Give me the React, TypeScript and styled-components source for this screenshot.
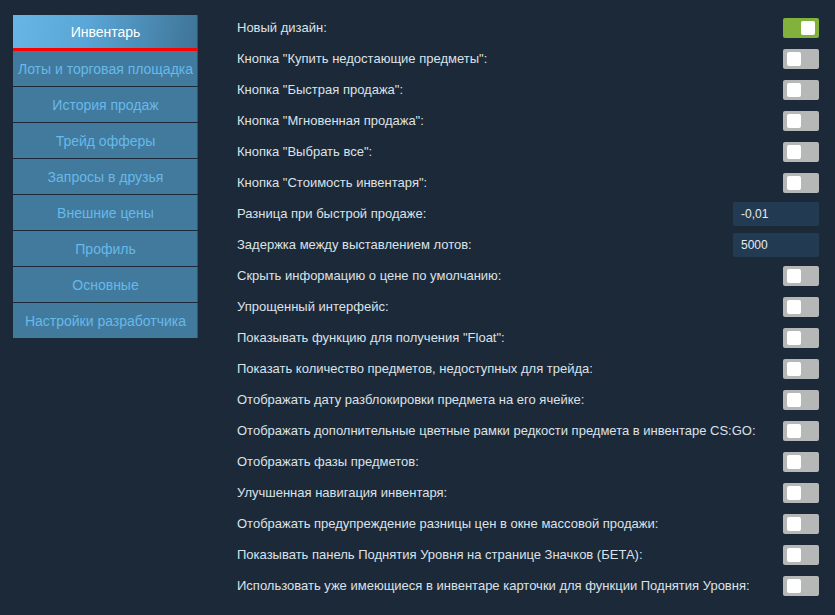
import React from "react";
import styled, { createGlobalStyle } from "styled-components";

const GlobalStyle = createGlobalStyle`
  html, body {
    margin: 0;
    padding: 0;
    background: #1c2939;
    font-family: Arial, "Liberation Sans", sans-serif;
  }
`;

const Page = styled.div`
  display: flex;
  align-items: flex-start;
  gap: 39px;
  padding: 15px 16px 0 13px;
  min-height: 615px;
  box-sizing: border-box;
`;

const Sidebar = styled.nav`
  width: 185px;
  flex-shrink: 0;
  display: flex;
  flex-direction: column;
  gap: 1px;
`;

const NavItem = styled.div<{ $active?: boolean }>`
  height: ${(p) => (p.$active ? "33px" : "35px")};
  display: flex;
  align-items: center;
  justify-content: center;
  font-size: 14px;
  white-space: nowrap;
  color: ${(p) => (p.$active ? "#ffffff" : "#66b9ea")};
  background: ${(p) =>
    p.$active
      ? "linear-gradient(100deg, #66b6e6 0%, #5aa6d6 40%, #3e7395 100%)"
      : "#427a9d"};
  border-bottom: ${(p) => (p.$active ? "3px solid #ff0000" : "none")};
  margin-bottom: ${(p) => (p.$active ? "-1px" : "0")};
  box-shadow: inset -1px 0 0 rgba(30, 50, 70, 0.5);
`;

const Main = styled.div`
  flex: 1;
  display: flex;
  flex-direction: column;
  margin-top: -3px;
`;

const Row = styled.div`
  height: 31px;
  display: flex;
  align-items: center;
  justify-content: space-between;
`;

const Label = styled.span`
  font-size: 13px;
  color: #dbe2e8;
  white-space: nowrap;
`;

const Toggle = styled.div<{ $on?: boolean }>`
  width: 36px;
  height: 20px;
  border-radius: 2px;
  box-sizing: border-box;
  padding: 3px 4px;
  display: flex;
  justify-content: ${(p) => (p.$on ? "flex-end" : "flex-start")};
  background: ${(p) => (p.$on ? "#82b23c" : "#b5b8b6")};
`;

const Knob = styled.div`
  width: 14px;
  height: 14px;
  border-radius: 2px;
  background: #ffffff;
`;

const Input = styled.div`
  width: 86px;
  height: 24px;
  box-sizing: border-box;
  border-radius: 2px;
  background: #233b52;
  color: #e6ebef;
  font-size: 12px;
  display: flex;
  align-items: center;
  padding-left: 8px;
`;

const navItems = [
  "Инвентарь",
  "Лоты и торговая площадка",
  "История продаж",
  "Трейд офферы",
  "Запросы в друзья",
  "Внешние цены",
  "Профиль",
  "Основные",
  "Настройки разработчика",
];

type Setting = { label: string; on?: boolean; value?: string };

const settings: Setting[] = [
  { label: "Новый дизайн:", on: true },
  { label: 'Кнопка "Купить недостающие предметы":' },
  { label: 'Кнопка "Быстрая продажа":' },
  { label: 'Кнопка "Мгновенная продажа":' },
  { label: 'Кнопка "Выбрать все":' },
  { label: 'Кнопка "Стоимость инвентаря":' },
  { label: "Разница при быстрой продаже:", value: "-0,01" },
  { label: "Задержка между выставлением лотов:", value: "5000" },
  { label: "Скрыть информацию о цене по умолчанию:" },
  { label: "Упрощенный интерфейс:" },
  { label: 'Показывать функцию для получения "Float":' },
  { label: "Показать количество предметов, недоступных для трейда:" },
  { label: "Отображать дату разблокировки предмета на его ячейке:" },
  {
    label:
      "Отображать дополнительные цветные рамки редкости предмета в инвентаре CS:GO:",
  },
  { label: "Отображать фазы предметов:" },
  { label: "Улучшенная навигация инвентаря:" },
  { label: "Отображать предупреждение разницы цен в окне массовой продажи:" },
  { label: "Показывать панель Поднятия Уровня на странице Значков (БЕТА):" },
  {
    label:
      "Использовать уже имеющиеся в инвентаре карточки для функции Поднятия Уровня:",
  },
];

export default function App() {
  return (
    <>
      <GlobalStyle />
      <Page>
        <Sidebar>
          {navItems.map((n, i) => (
            <NavItem key={n} $active={i === 0}>
              {n}
            </NavItem>
          ))}
        </Sidebar>
        <Main>
          {settings.map((s) => (
            <Row key={s.label}>
              <Label>{s.label}</Label>
              {s.value !== undefined ? (
                <Input>{s.value}</Input>
              ) : (
                <Toggle $on={s.on}>
                  <Knob />
                </Toggle>
              )}
            </Row>
          ))}
        </Main>
      </Page>
    </>
  );
}
